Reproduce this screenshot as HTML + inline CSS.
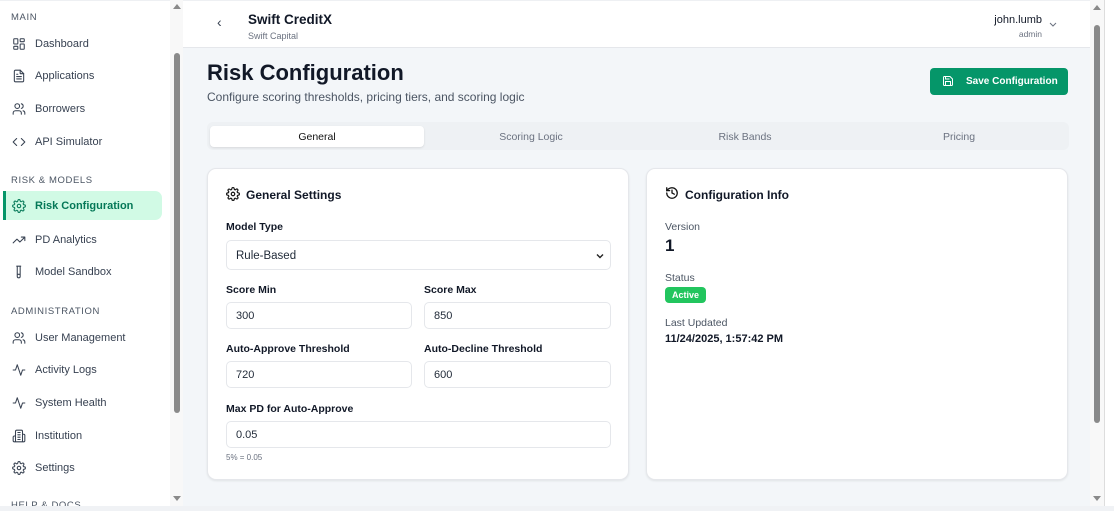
<!DOCTYPE html>
<html><head><meta charset="utf-8"><style>
*{box-sizing:border-box;margin:0;padding:0}
body{width:1114px;height:511px;overflow:hidden;font-family:"Liberation Sans",sans-serif;background:#fff;position:relative;color:#111827}
.side{position:absolute;left:0;top:0;width:170px;height:506px;background:#fff;border-top:1px solid #eef0f3}
.sec{position:absolute;left:11px;font-size:9.5px;letter-spacing:.6px;color:#4b5563}
.item{position:absolute;left:3px;width:159px;height:29px;display:flex;align-items:center;padding-left:9px;font-size:11px;color:#374151}
.item svg{width:14px;height:14px;margin-right:9px;fill:none;stroke:#374151;stroke-width:1.8;stroke-linecap:round;stroke-linejoin:round}
.item.act{background:#d1fae5;color:#047857;font-weight:bold;border-left:3px solid #059669;border-radius:0 7px 7px 0;padding-left:6px}
.item.act svg{stroke:#047857}
.sb{position:absolute;background:#f1f1f1}
.thumb{position:absolute;background:#8a8a8a;border-radius:4px}
.arr{position:absolute;width:0;height:0;border-left:4px solid transparent;border-right:4px solid transparent}
.main{position:absolute;left:183px;top:0;width:907px;height:506px;background:#f3f6f9}
.hdr{position:absolute;left:0;top:0;width:907px;height:48px;background:#fff;border-bottom:1px solid #e5e7eb;border-top:1px solid #eef0f3}
.card{position:absolute;background:#fff;border:1px solid #e5e7eb;border-radius:9px;box-shadow:0 1px 2px rgba(0,0,0,.08)}
.lbl{position:absolute;font-size:10.5px;font-weight:bold;color:#111827}
.inp{position:absolute;height:27px;border:1px solid #e5e7eb;border-radius:5px;font-size:11px;color:#1f2937;padding:7px 9px;background:#fff}
</style></head><body>
<div class="side">
<div class="sec" style="top:11px">MAIN</div>
<div class="item" style="top:28px"><svg viewBox="0 0 24 24"><rect x="3" y="3" width="7" height="9" rx="1"/><rect x="14" y="3" width="7" height="5" rx="1"/><rect x="14" y="12" width="7" height="9" rx="1"/><rect x="3" y="16" width="7" height="5" rx="1"/></svg>Dashboard</div>
<div class="item" style="top:60px"><svg viewBox="0 0 24 24"><path d="M14 2H6a2 2 0 0 0-2 2v16a2 2 0 0 0 2 2h12a2 2 0 0 0 2-2V8z"/><path d="M14 2v6h6M16 13H8M16 17H8M10 9H8"/></svg>Applications</div>
<div class="item" style="top:93px"><svg viewBox="0 0 24 24"><path d="M16 21v-2a4 4 0 0 0-4-4H6a4 4 0 0 0-4 4v2"/><circle cx="9" cy="7" r="4"/><path d="M22 21v-2a4 4 0 0 0-3-3.9M16 3.1a4 4 0 0 1 0 7.8"/></svg>Borrowers</div>
<div class="item" style="top:126px"><svg viewBox="0 0 24 24"><path d="M16 18l6-6-6-6M8 6l-6 6 6 6"/></svg>API Simulator</div>
<div class="sec" style="top:174px">RISK &amp; MODELS</div>
<div class="item act" style="top:190px"><svg viewBox="0 0 24 24"><circle cx="12" cy="12" r="3"/><path d="M19.4 15a1.7 1.7 0 0 0 .3 1.8l.1.1a2 2 0 1 1-2.8 2.8l-.1-.1a1.7 1.7 0 0 0-1.8-.3 1.7 1.7 0 0 0-1 1.5V21a2 2 0 1 1-4 0v-.1a1.7 1.7 0 0 0-1.1-1.5 1.7 1.7 0 0 0-1.8.3l-.1.1a2 2 0 1 1-2.8-2.8l.1-.1a1.7 1.7 0 0 0 .3-1.8 1.7 1.7 0 0 0-1.5-1H3a2 2 0 1 1 0-4h.1a1.7 1.7 0 0 0 1.5-1.1 1.7 1.7 0 0 0-.3-1.8l-.1-.1a2 2 0 1 1 2.8-2.8l.1.1a1.7 1.7 0 0 0 1.8.3H9a1.7 1.7 0 0 0 1-1.5V3a2 2 0 1 1 4 0v.1a1.7 1.7 0 0 0 1 1.5 1.7 1.7 0 0 0 1.8-.3l.1-.1a2 2 0 1 1 2.8 2.8l-.1.1a1.7 1.7 0 0 0-.3 1.8V9a1.7 1.7 0 0 0 1.5 1H21a2 2 0 1 1 0 4h-.1a1.7 1.7 0 0 0-1.5 1z"/></svg>Risk Configuration</div>
<div class="item" style="top:224px"><svg viewBox="0 0 24 24"><path d="M22 7l-8.5 8.5-5-5L2 17M16 7h6v6"/></svg>PD Analytics</div>
<div class="item" style="top:256px"><svg viewBox="0 0 24 24"><path d="M9 2v17.5a2.5 2.5 0 0 0 5 0V2M8 2h7M9 16h5"/></svg>Model Sandbox</div>
<div class="sec" style="top:305px">ADMINISTRATION</div>
<div class="item" style="top:322px"><svg viewBox="0 0 24 24"><path d="M16 21v-2a4 4 0 0 0-4-4H6a4 4 0 0 0-4 4v2"/><circle cx="9" cy="7" r="4"/><path d="M22 21v-2a4 4 0 0 0-3-3.9M16 3.1a4 4 0 0 1 0 7.8"/></svg>User Management</div>
<div class="item" style="top:354px"><svg viewBox="0 0 24 24"><path d="M22 12h-4l-3 9L9 3l-3 9H2"/></svg>Activity Logs</div>
<div class="item" style="top:387px"><svg viewBox="0 0 24 24"><path d="M22 12h-4l-3 9L9 3l-3 9H2"/></svg>System Health</div>
<div class="item" style="top:420px"><svg viewBox="0 0 24 24"><path d="M6 22V4a2 2 0 0 1 2-2h8a2 2 0 0 1 2 2v18zM6 12H4a2 2 0 0 0-2 2v6a2 2 0 0 0 2 2h2M18 9h2a2 2 0 0 1 2 2v9a2 2 0 0 1-2 2h-2M10 6h4M10 10h4M10 14h4M10 18h4"/></svg>Institution</div>
<div class="item" style="top:452px"><svg viewBox="0 0 24 24"><circle cx="12" cy="12" r="3"/><path d="M19.4 15a1.7 1.7 0 0 0 .3 1.8l.1.1a2 2 0 1 1-2.8 2.8l-.1-.1a1.7 1.7 0 0 0-1.8-.3 1.7 1.7 0 0 0-1 1.5V21a2 2 0 1 1-4 0v-.1a1.7 1.7 0 0 0-1.1-1.5 1.7 1.7 0 0 0-1.8.3l-.1.1a2 2 0 1 1-2.8-2.8l.1-.1a1.7 1.7 0 0 0 .3-1.8 1.7 1.7 0 0 0-1.5-1H3a2 2 0 1 1 0-4h.1a1.7 1.7 0 0 0 1.5-1.1 1.7 1.7 0 0 0-.3-1.8l-.1-.1a2 2 0 1 1 2.8-2.8l.1.1a1.7 1.7 0 0 0 1.8.3H9a1.7 1.7 0 0 0 1-1.5V3a2 2 0 1 1 4 0v.1a1.7 1.7 0 0 0 1 1.5 1.7 1.7 0 0 0 1.8-.3l.1-.1a2 2 0 1 1 2.8 2.8l-.1.1a1.7 1.7 0 0 0-.3 1.8V9a1.7 1.7 0 0 0 1.5 1H21a2 2 0 1 1 0 4h-.1a1.7 1.7 0 0 0-1.5 1z"/></svg>Settings</div>
<div class="sec" style="top:499px">HELP &amp; DOCS</div>
</div>
<div class="sb" style="left:170px;top:0;width:13px;height:506px;background:#f8f8f8"></div>
<div class="thumb" style="left:174px;top:53px;width:6px;height:360px"></div>
<div class="arr" style="left:173px;top:4px;border-bottom:5px solid #8a8a8a"></div>
<div class="arr" style="left:173px;top:496px;border-top:5px solid #8a8a8a"></div>

<div class="main">
<div class="hdr">
<div style="position:absolute;left:34px;top:13px;font-size:14px;color:#374151">‹</div>
<div style="position:absolute;left:65px;top:11px;font-size:13.5px;font-weight:bold">Swift CreditX</div>
<div style="position:absolute;left:65px;top:30px;font-size:9px;color:#6b7280">Swift Capital</div>
<div style="position:absolute;right:48px;top:13px;font-size:11px;text-align:right">john.lumb</div>
<div style="position:absolute;right:48px;top:28px;font-size:8.5px;color:#6b7280">admin</div>
<svg style="position:absolute;left:865px;top:20px" width="10" height="8" viewBox="0 0 10 8"><path d="M2 2l3 3 3-3" fill="none" stroke="#6b7280" stroke-width="1"/></svg>
</div>
<div style="position:absolute;left:24px;top:60px;font-size:22px;font-weight:bold;color:#111827">Risk Configuration</div>
<div style="position:absolute;left:24px;top:90px;font-size:12px;color:#4b5563">Configure scoring thresholds, pricing tiers, and scoring logic</div>
<div style="position:absolute;left:747px;top:68px;width:138px;height:27px;background:#059669;border-radius:4px;color:#fff;font-size:10px;font-weight:bold;padding:8px 0 0 36px;white-space:nowrap"><svg style="position:absolute;left:12px;top:7px" width="12" height="12" viewBox="0 0 24 24" fill="none" stroke="#fff" stroke-width="2"><path d="M19 21H5a2 2 0 0 1-2-2V5a2 2 0 0 1 2-2h11l5 5v11a2 2 0 0 1-2 2z"/><path d="M17 21v-8H7v8M7 3v5h8"/></svg>Save Configuration</div>
<div style="position:absolute;left:24px;top:122px;width:862px;height:28px;background:#eef1f4;border-radius:6px"></div>
<div style="position:absolute;left:27px;top:126px;width:214px;height:21px;background:#fff;border-radius:4px;box-shadow:0 1px 2px rgba(0,0,0,.1)"></div>
<div style="position:absolute;left:27px;top:131px;width:214px;text-align:center;font-size:10.5px;color:#111">General</div>
<div style="position:absolute;left:241px;top:131px;width:214px;text-align:center;font-size:10.5px;color:#6b7280">Scoring Logic</div>
<div style="position:absolute;left:455px;top:131px;width:214px;text-align:center;font-size:10.5px;color:#6b7280">Risk Bands</div>
<div style="position:absolute;left:669px;top:131px;width:214px;text-align:center;font-size:10.5px;color:#6b7280">Pricing</div>

<div class="card" style="left:24px;top:168px;width:422px;height:312px">
<svg style="position:absolute;left:18px;top:18px" width="14" height="14" viewBox="0 0 24 24" fill="none" stroke="#111" stroke-width="2"><circle cx="12" cy="12" r="3"/><path d="M19.4 15a1.7 1.7 0 0 0 .3 1.8l.1.1a2 2 0 1 1-2.8 2.8l-.1-.1a1.7 1.7 0 0 0-1.8-.3 1.7 1.7 0 0 0-1 1.5V21a2 2 0 1 1-4 0v-.1a1.7 1.7 0 0 0-1.1-1.5 1.7 1.7 0 0 0-1.8.3l-.1.1a2 2 0 1 1-2.8-2.8l.1-.1a1.7 1.7 0 0 0 .3-1.8 1.7 1.7 0 0 0-1.5-1H3a2 2 0 1 1 0-4h.1a1.7 1.7 0 0 0 1.5-1.1 1.7 1.7 0 0 0-.3-1.8l-.1-.1a2 2 0 1 1 2.8-2.8l.1.1a1.7 1.7 0 0 0 1.8.3H9a1.7 1.7 0 0 0 1-1.5V3a2 2 0 1 1 4 0v.1a1.7 1.7 0 0 0 1 1.5 1.7 1.7 0 0 0 1.8-.3l.1-.1a2 2 0 1 1 2.8 2.8l-.1.1a1.7 1.7 0 0 0-.3 1.8V9a1.7 1.7 0 0 0 1.5 1H21a2 2 0 1 1 0 4h-.1a1.7 1.7 0 0 0-1.5 1z"/></svg>
<div style="position:absolute;left:38px;top:19px;font-size:12px;font-weight:bold">General Settings</div>
<div class="lbl" style="left:18px;top:52px">Model Type</div>
<div class="inp" style="left:18px;top:71px;width:385px;height:30px;font-size:11.5px;padding-top:9px">Rule-Based<svg style="position:absolute;right:6px;top:11px" width="8" height="8" viewBox="0 0 8 8"><path d="M1 2.5l3 3 3-3" fill="none" stroke="#222" stroke-width="1.4"/></svg></div>
<div class="lbl" style="left:18px;top:115px">Score Min</div>
<div class="lbl" style="left:216px;top:115px">Score Max</div>
<div class="inp" style="left:18px;top:133px;width:186px">300</div>
<div class="inp" style="left:216px;top:133px;width:187px">850</div>
<div class="lbl" style="left:18px;top:174px">Auto-Approve Threshold</div>
<div class="lbl" style="left:216px;top:174px">Auto-Decline Threshold</div>
<div class="inp" style="left:18px;top:192px;width:186px">720</div>
<div class="inp" style="left:216px;top:192px;width:187px">600</div>
<div class="lbl" style="left:18px;top:234px">Max PD for Auto-Approve</div>
<div class="inp" style="left:18px;top:252px;width:385px">0.05</div>
<div style="position:absolute;left:18px;top:284px;font-size:8px;color:#6b7280">5% = 0.05</div>
</div>

<div class="card" style="left:463px;top:168px;width:422px;height:312px">
<svg style="position:absolute;left:18px;top:17px" width="14" height="14" viewBox="0 0 24 24" fill="none" stroke="#111" stroke-width="2.2" stroke-linecap="round"><path d="M3 12a9 9 0 1 0 9-9 9.75 9.75 0 0 0-6.74 2.74L3 8"/><path d="M3 3v5h5M12 7v5l4 2"/></svg>
<div style="position:absolute;left:38px;top:19px;font-size:12px;font-weight:bold">Configuration Info</div>
<div style="position:absolute;left:18px;top:52px;font-size:10.5px;color:#4b5563">Version</div>
<div style="position:absolute;left:18px;top:67px;font-size:17px;font-weight:bold">1</div>
<div style="position:absolute;left:18px;top:103px;font-size:10.5px;color:#4b5563">Status</div>
<div style="position:absolute;left:18px;top:118px;width:41px;height:16px;background:#22c55e;border-radius:4px;color:#fff;font-size:9px;font-weight:bold;text-align:center;line-height:16px">Active</div>
<div style="position:absolute;left:18px;top:148px;font-size:10.5px;color:#4b5563">Last Updated</div>
<div style="position:absolute;left:18px;top:164px;font-size:11px;font-weight:bold">11/24/2025, 1:57:42 PM</div>
</div>
</div>
<div class="sb" style="left:1090px;top:0;width:14px;height:506px;background:#f8f8f8"></div>
<div class="thumb" style="left:1094px;top:25px;width:6px;height:398px"></div>
<div class="arr" style="left:1093px;top:5px;border-bottom:5px solid #8a8a8a"></div>
<div class="arr" style="left:1093px;top:496px;border-top:5px solid #8a8a8a"></div>
<div style="position:absolute;left:1104px;top:0;width:1px;height:506px;background:#ddd"></div>
<div style="position:absolute;left:0;top:506px;width:1114px;height:5px;background:#f0f2f5"></div>
</body></html>
